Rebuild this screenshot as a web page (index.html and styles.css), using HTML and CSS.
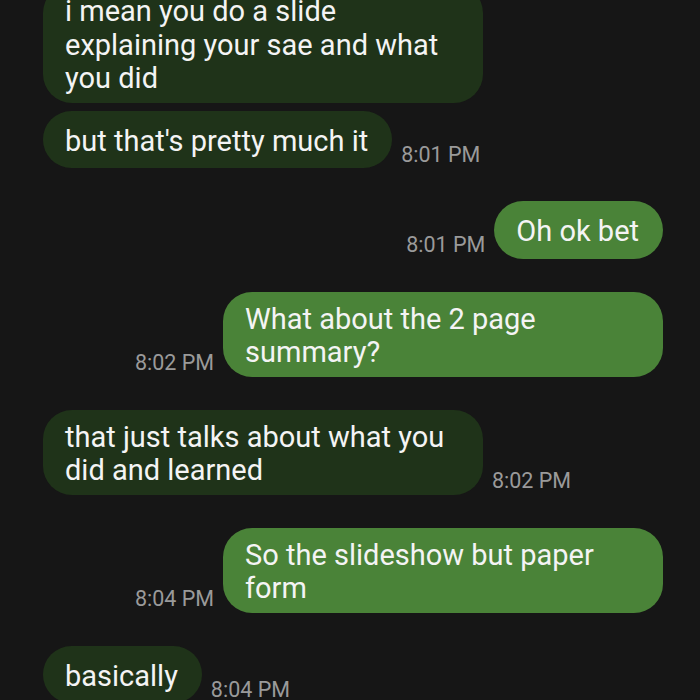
FILE: index.html
```html
<!DOCTYPE html>
<html lang="en">
<head>
<meta charset="utf-8">
<title>Chat</title>
<link rel="stylesheet" href="styles.css">
</head>
<body>
<main class="thread">
  <div class="row in first">
    <div class="bubble multi wide">i mean you do a slide<br>explaining your sae and what<br>you did</div>
  </div>
  <div class="row in grouped">
    <div class="bubble single">but that's pretty much it</div>
    <span class="time">8:01 PM</span>
  </div>
  <div class="row out">
    <span class="time">8:01 PM</span>
    <div class="bubble single">Oh ok bet</div>
  </div>
  <div class="row out">
    <span class="time">8:02 PM</span>
    <div class="bubble multi wide">What about the 2 page<br>summary?</div>
  </div>
  <div class="row in">
    <div class="bubble multi wide">that just talks about what you<br>did and learned</div>
    <span class="time">8:02 PM</span>
  </div>
  <div class="row out">
    <span class="time">8:04 PM</span>
    <div class="bubble multi wide">So the slideshow but paper<br>form</div>
  </div>
  <div class="row in">
    <div class="bubble single">basically</div>
    <span class="time">8:04 PM</span>
  </div>
</main>
</body>
</html>
```
FILE: styles.css
```css
html, body {
  margin: 0;
  padding: 0;
  background: #161616;
  height: 100%;
  overflow: hidden;
}

.thread {
  display: flex;
  flex-direction: column;
  gap: 33px;
  font-family: Roboto, "Noto Sans", sans-serif;
}

.row {
  display: flex;
  align-items: flex-end;
  gap: 9px;
}

.row.first {
  margin-top: -16px;
}

.row.grouped {
  margin-top: -25px;
}

.row.in {
  justify-content: flex-start;
  padding-left: 43px;
}

.row.out {
  justify-content: flex-end;
  padding-right: 37px;
}

.bubble {
  box-sizing: border-box;
  max-width: 440px;
  font-size: 29px;
  line-height: 33.5px;
  color: #f4f4f4;
  border-radius: 29px;
  padding: 11px 24px 7px 22px;
  white-space: nowrap;
}

.bubble.single {
  padding-top: 14px;
  padding-bottom: 10px;
}

.bubble.wide {
  width: 440px;
}

.row.in .bubble {
  background: #1f3319;
}

.row.out .bubble {
  background: #4a8338;
}

.time {
  font-size: 21.5px;
  line-height: 1;
  color: #9a9a9a;
  margin-bottom: 3px;
  white-space: nowrap;
}
```
